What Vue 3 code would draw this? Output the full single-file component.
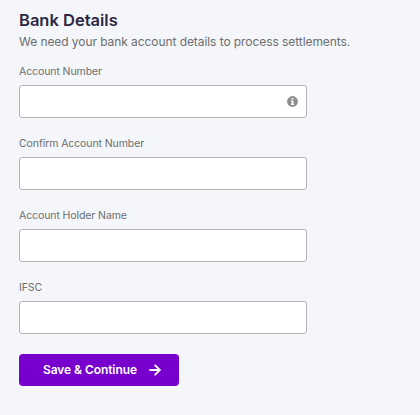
<script setup>
const fields = [
  { id: 'account-number', label: 'Account Number', info: true },
  { id: 'confirm-account-number', label: 'Confirm Account Number' },
  { id: 'holder-name', label: 'Account Holder Name' },
  { id: 'ifsc', label: 'IFSC' },
]
</script>

<template>
  <main class="page">
    <h1 class="title">Bank Details</h1>
    <p class="subtitle">We need your bank account details to process settlements.</p>
    <form class="form" @submit.prevent>
      <div v-for="field in fields" :key="field.id" class="field">
        <label class="label" :for="field.id">{{ field.label }}</label>
        <div class="control">
          <input :id="field.id" class="input" type="text" />
          <svg v-if="field.info" class="info" viewBox="0 0 11 11" aria-hidden="true">
            <circle cx="5.5" cy="5.5" r="5.4" fill="#8e8e8e" />
            <path d="M4.6 1.9h1.8v1.6H4.6zM4 4.4h2.4v3.3H7v1.2H4V7.7h.6V5.6H4z" fill="#fff" />
          </svg>
        </div>
      </div>
      <button class="save" type="submit">
        <span class="save-text">Save &amp; Continue</span>
        <svg class="arrow" viewBox="0 0 12 12" aria-hidden="true">
          <path d="M1.1 6h9.6M6.2 1.4 10.8 6l-4.6 4.6" fill="none" stroke="#fff" stroke-width="1.9" stroke-linecap="round" stroke-linejoin="round" />
        </svg>
      </button>
    </form>
  </main>
</template>

<style>
body {
  background: #f4f6fa;
}
</style>

<style scoped>
.page {
  box-sizing: border-box;
  min-height: 415px;
  padding: 9px 19px 0;
  background: #f4f6fa;
  font-family: Inter, "Liberation Sans", sans-serif;
}
.title {
  margin: 0;
  color: #2b2745;
  font-size: 16.5px;
  font-weight: 600;
  line-height: 22px;
  white-space: nowrap;
}
.subtitle {
  margin: 2px 0 0;
  color: #6c6e70;
  font-size: 12px;
  line-height: 18px;
  letter-spacing: -0.07px;
  white-space: nowrap;
}
.form {
  padding-top: 12px;
}
.field {
  height: 72px;
}
.label {
  display: block;
  width: max-content;
  height: 22px;
  color: #6c6e70;
  font-size: 10.5px;
  line-height: 17px;
  letter-spacing: -0.09px;
}
.control {
  display: flex;
  position: relative;
  width: 288px;
  height: 33px;
}
.input {
  box-sizing: border-box;
  width: 100%;
  height: 100%;
  margin: 0;
  padding: 0 32px 0 10px;
  border: 1px solid #b3b5b7;
  border-radius: 3px;
  background: #fff;
  font: inherit;
  outline: none;
}
.info {
  position: absolute;
  top: 11px;
  right: 9.5px;
  width: 11px;
  height: 11px;
}
.save {
  display: flex;
  align-items: center;
  box-sizing: border-box;
  width: 160px;
  height: 32px;
  margin: 3px 0 0;
  padding: 0 18px 0 24px;
  justify-content: space-between;
  border: 0;
  border-radius: 4px;
  background: #7700cc;
  color: #fff;
  font: 600 12px/32px Inter, "Liberation Sans", sans-serif;
  letter-spacing: -0.07px;
  white-space: nowrap;
}
.arrow {
  width: 12px;
  height: 12px;
}
</style>
